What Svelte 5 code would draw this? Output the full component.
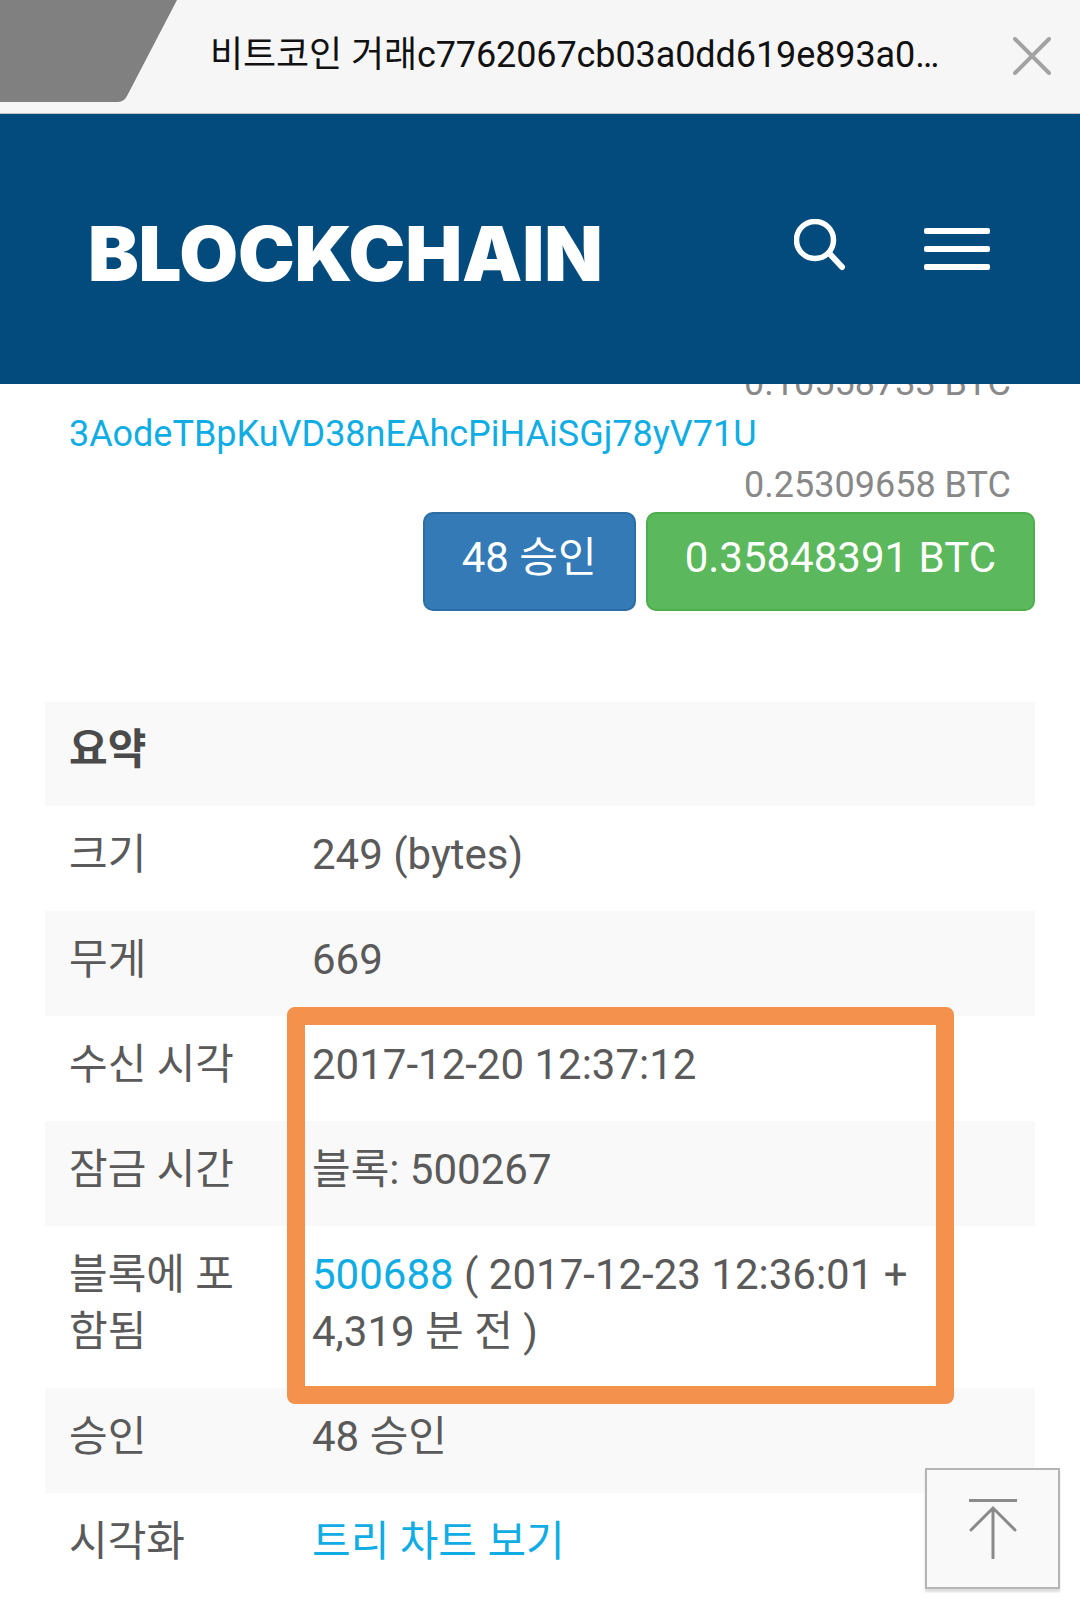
<script>
  const rows = [
    { label: "크기", value: "249 (bytes)" },
    { label: "무게", value: "669" },
    { label: "수신 시각", value: "2017-12-20 12:37:12" },
    { label: "잠금 시간", value: "블록: 500267" },
    { label: "블록에 포함됨", link: "500688", value: " ( 2017-12-23 12:36:01 + 4,319 분 전 )" },
    { label: "승인", value: "48 승인" },
    { label: "시각화", link: "트리 차트 보기", value: "" }
  ];
</script>

<main>
  <div class="topbar">
    <svg class="tab" width="180" height="103" viewBox="0 0 180 103">
      <path d="M0 0H177L127 96Q124 102 117 102H0Z" fill="#808080" />
    </svg>
    <span class="title">비트코인 거래c7762067cb03a0dd619e893a0…</span>
    <svg class="close" width="38" height="38" viewBox="0 0 38 38">
      <path d="M2 2L36 36M36 2L2 36" stroke="#a3a3a3" stroke-width="4" stroke-linecap="round" />
    </svg>
  </div>

  <header>
    <span class="logo">BLOCKCHAIN</span>
    <svg class="search" width="54" height="54" viewBox="0 0 54 54">
      <circle cx="21" cy="21" r="18.5" fill="none" stroke="#fff" stroke-width="5.5" />
      <path d="M35 34L48 48" stroke="#fff" stroke-width="6" stroke-linecap="round" />
    </svg>
    <div class="burger"><i></i><i></i><i></i></div>
  </header>

  <section class="content">
    <div class="amount">0.10558733 BTC</div>
    <a class="address">3AodeTBpKuVD38nEAhcPiHAiSGj78yV71U</a>
    <div class="amount">0.25309658 BTC</div>
    <div class="buttons">
      <button class="blue"><span>48 승인</span></button>
      <button class="green"><span>0.35848391 BTC</span></button>
    </div>

    <div class="table">
      <div class="row head"><strong>요약</strong></div>
      {#each rows as row}
        <div class="row">
          <div class="label">{row.label}</div>
          <div class="value">{#if row.link}<a>{row.link}</a>{/if}{row.value}</div>
        </div>
      {/each}
    </div>
  </section>

  <div class="highlight"></div>

  <button class="totop" aria-label="맨 위로">
    <svg width="50" height="60" viewBox="0 0 50 60">
      <path d="M1 1.5H49" stroke="#8a8a8a" stroke-width="3" />
      <path d="M25 59V10M3 31L25 9L47 31" fill="none" stroke="#8a8a8a" stroke-width="3" stroke-linecap="round" />
    </svg>
  </button>
</main>

<style>
  :global(body) {
    margin: 0;
    background: #fff;
  }

  main {
    position: relative;
    height: 1602px;
    overflow: hidden;
    font-family: Roboto, "Noto Sans CJK KR", sans-serif;
    color: #5a5a5a;
  }

  .topbar {
    position: relative;
    z-index: 2;
    height: 113px;
    display: flex;
    align-items: center;
    background: #f6f6f6;
    border-bottom: 1px solid #c4c4c4;
  }

  .tab {
    align-self: flex-start;
    flex: none;
  }

  .title {
    margin-left: 30px;
    margin-bottom: 12px;
    font-size: 36px;
    letter-spacing: -0.1px;
    color: #111;
    white-space: nowrap;
  }

  .close {
    margin-left: auto;
    margin-right: 29px;
    margin-bottom: 2px;
  }

  header {
    position: relative;
    z-index: 2;
    height: 270px;
    display: flex;
    align-items: flex-start;
    padding: 0 90px 0 88px;
    background: #034b7d;
  }

  .logo {
    margin-top: 102px;
    font-family: Inter, sans-serif;
    font-weight: 900;
    font-size: 76px;
    line-height: 74px;
    letter-spacing: -0.2px;
    color: #fff;
  }

  .search {
    margin-left: auto;
    margin-top: 105px;
  }

  .burger {
    margin-left: 76px;
    margin-top: 114px;
    width: 66px;
    display: flex;
    flex-direction: column;
    gap: 12px;
  }

  .burger i {
    display: block;
    height: 6px;
    border-radius: 2px;
    background: #fff;
  }

  .content {
    margin-top: -26px;
    font-size: 36px;
    line-height: 51px;
  }

  .amount {
    padding-right: 69px;
    text-align: right;
    color: #888;
  }

  .address {
    display: block;
    padding-left: 69px;
    color: #10ade4;
  }

  .buttons {
    display: flex;
    justify-content: flex-end;
    gap: 10px;
    margin-top: 1px;
    padding-right: 45px;
  }

  .buttons button {
    height: 99px;
    padding: 0 37px 8px;
    border-width: 2px;
    border-style: solid;
    border-radius: 10px;
    font: inherit;
    font-size: 42px;
    color: #fff;
  }

  .blue {
    background: #337ab7;
    border-color: #2e6da4;
  }

  .green {
    background: #5cb85c;
    border-color: #4cae4c;
  }

  .table {
    margin: 91px 45px 0;
    font-size: 42px;
    line-height: 57px;
  }

  .row {
    display: grid;
    grid-template-columns: 243px 1fr;
    padding: 20px 24px 28px;
  }

  .row:nth-child(odd) {
    background: #f9f9f9;
  }

  .head {
    display: block;
    padding-top: 19px;
    padding-bottom: 28px;
  }

  .head strong {
    color: #4a4a4a;
  }

  .label {
    padding-right: 47px;
  }

  .value a {
    color: #10ade4;
  }

  .highlight {
    position: absolute;
    left: 287px;
    top: 1007px;
    width: 667px;
    height: 397px;
    box-sizing: border-box;
    border: 18px solid #f4914d;
    border-radius: 8px;
  }

  .totop {
    position: absolute;
    left: 925px;
    top: 1468px;
    width: 135px;
    height: 121px;
    display: grid;
    place-items: center;
    padding: 0;
    background: #f9f9f9;
    border: 2px solid #b5b5b5;
    box-shadow: 0 3px 2px #ddd;
  }
</style>
